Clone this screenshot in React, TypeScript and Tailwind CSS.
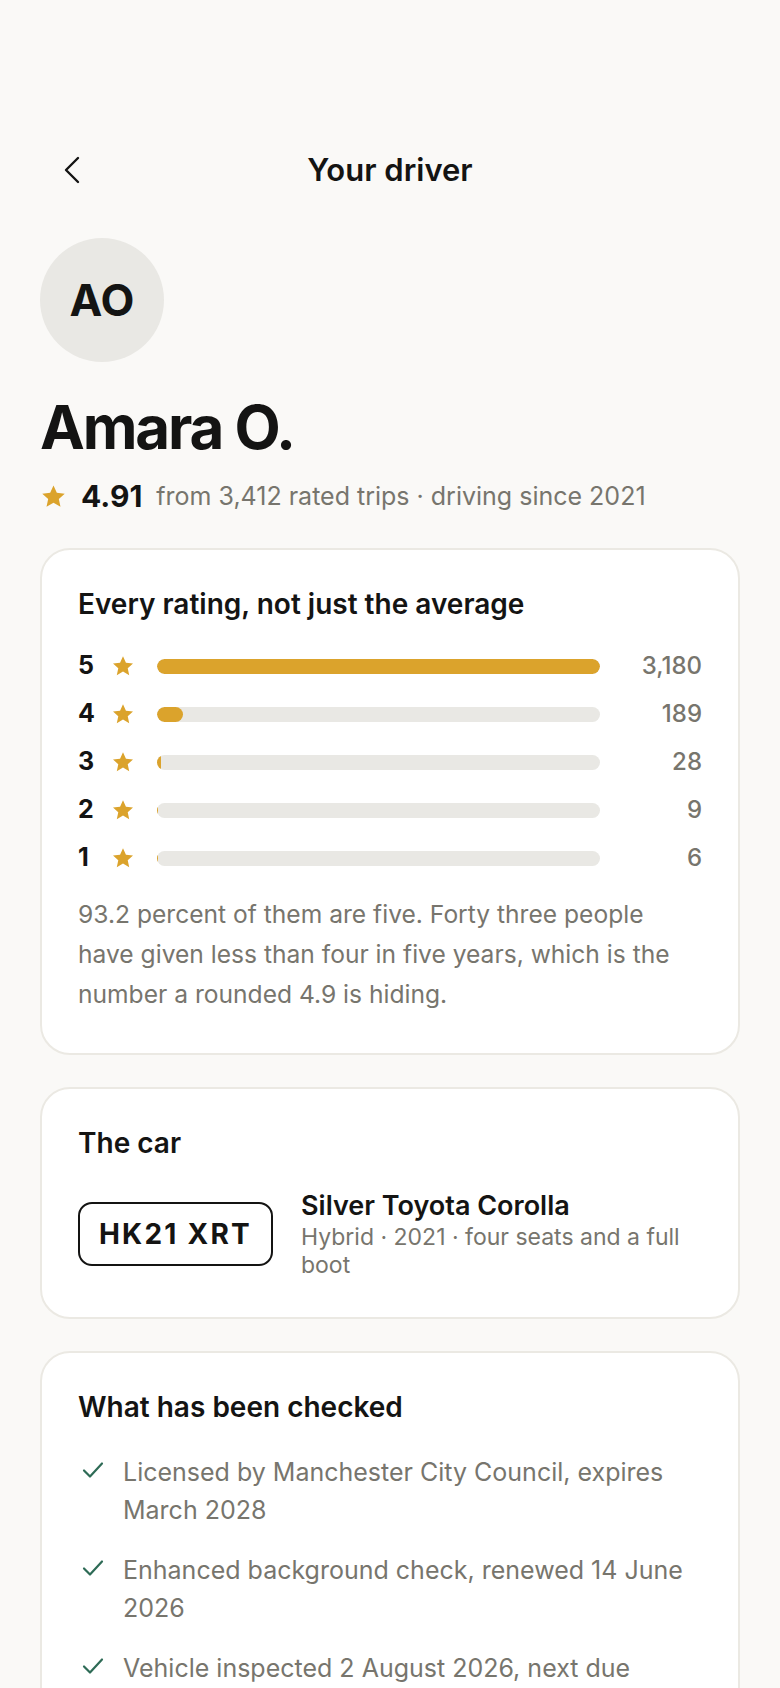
import React from "react";

const GOLD = "bg-[#dba32c]";

const ratings = [
  { stars: 5, count: 3180 },
  { stars: 4, count: 189 },
  { stars: 3, count: 28 },
  { stars: 2, count: 9 },
  { stars: 1, count: 6 },
];

const checks = [
  "Licensed by Manchester City Council, expires March 2028",
  "Enhanced background check, renewed 14 June 2026",
  "Vehicle inspected 2 August 2026, next due February 2027",
];

const Star = ({ size = 20 }: { size?: number }) => (
  <svg width={size} height={size} viewBox="0 0 24 24" fill="#dba32c">
    <path d="M12 2.2l2.95 6.5 7.05.75-5.27 4.77 1.48 6.98L12 17.6l-6.21 3.6 1.48-6.98L2 9.45l7.05-.75L12 2.2z" />
  </svg>
);

const Card = ({ children, pb = "pb-9" }: { children: React.ReactNode; pb?: string }) => (
  <div className={`rounded-[30px] border-2 border-[#ebe9e3] bg-white px-9 pt-9 ${pb}`}>
    {children}
  </div>
);

export default function App() {
  const max = Math.max(...ratings.map((r) => r.count));

  return (
    <div
      className="min-h-screen bg-[#faf9f7] text-[#141413]"
      style={{ fontFamily: "Inter, 'Noto Sans', sans-serif" }}
    >
      <div className="px-10 pt-[142px] pb-10">
        {/* header */}
        <div className="relative flex h-14 items-center justify-center">
          <button className="absolute left-[20px] top-1/2 -translate-y-1/2 p-1">
            <svg width="16" height="28" viewBox="0 0 16 28" fill="none">
              <path
                d="M14 2L2 14l12 12"
                stroke="#141413"
                strokeWidth="2.4"
                strokeLinecap="round"
                strokeLinejoin="round"
              />
            </svg>
          </button>
          <h1 className="text-[31px] font-semibold">Your driver</h1>
        </div>

        {/* driver */}
        <div className="mt-10 flex h-[124px] w-[124px] items-center justify-center rounded-full bg-[#e9e8e4]">
          <span className="text-[44px] font-bold">AO</span>
        </div>
        <h2 className="mt-8 text-[60px] font-bold leading-[1.1] tracking-[-0.035em]">Amara O.</h2>
        <div className="mt-5 flex items-center leading-8">
          <Star size={27} />
          <span className="ml-[14px] text-[30px] font-bold">4.91</span>
          <span className="ml-[14px] text-[25px] text-[#77756d]">
            from 3,412 rated trips · driving since 2021
          </span>
        </div>

        <div className="mt-9 flex flex-col gap-[32px]">
          {/* ratings */}
          <Card pb="pb-[39px]">
            <h3 className="text-[28px] font-semibold leading-9">
              Every rating, not just the average
            </h3>
            <div className="mt-[30px] flex flex-col gap-5">
              {ratings.map((r) => (
                <div key={r.stars} className="flex h-7 items-center">
                  <span className="w-6 text-[25px] font-bold">{r.stars}</span>
                  <span className="ml-[9px]">
                    <Star size={24} />
                  </span>
                  <div className="ml-[22px] h-[15px] flex-1 overflow-hidden rounded-full bg-[#e9e8e4]">
                    <div
                      className={`h-full rounded-full ${GOLD}`}
                      style={{ width: `${(r.count / max) * 100}%` }}
                    />
                  </div>
                  <span className="w-[102px] text-right text-[24px] font-medium text-[#77756d]">
                    {r.count.toLocaleString("en-GB")}
                  </span>
                </div>
              ))}
            </div>
            <p className="mt-[22px] text-[24.6px] leading-10 text-[#77756d]">
              93.2 percent of them are five. Forty three people have given less than four in five
              years, which is the number a rounded 4.9 is hiding.
            </p>
          </Card>

          {/* car */}
          <Card>
            <h3 className="text-[28px] font-semibold leading-9">The car</h3>
            <div className="mt-7 mb-0.5 flex items-center gap-7">
              <div className="flex h-16 w-[195px] shrink-0 items-center justify-center rounded-[14px] border-2 border-[#141413]">
                <span className="text-[28px] font-bold tracking-[0.08em]">HK21 XRT</span>
              </div>
              <div>
                <div className="text-[27px] font-semibold leading-[34px]">
                  Silver Toyota Corolla
                </div>
                <div className="text-[23px] leading-7 text-[#77756d]">
                  Hybrid · 2021 · four seats and a full boot
                </div>
              </div>
            </div>
          </Card>

          {/* checks */}
          <Card>
            <h3 className="text-[28px] font-semibold leading-9">What has been checked</h3>
            <ul className="mt-[28px] flex flex-col gap-[22px]">
              {checks.map((c) => (
                <li key={c} className="flex items-start">
                  <svg className="mt-2 ml-1 shrink-0" width="22" height="18" viewBox="0 0 22 18" fill="none">
                    <path
                      d="M2 9.5l6 6L20 2.5"
                      stroke="#2e6b56"
                      strokeWidth="2.2"
                      strokeLinecap="round"
                      strokeLinejoin="round"
                    />
                  </svg>
                  <span className="ml-[19px] text-[25px] leading-[38px] text-[#77756d]">{c}</span>
                </li>
              ))}
            </ul>
          </Card>
        </div>
      </div>
    </div>
  );
}
